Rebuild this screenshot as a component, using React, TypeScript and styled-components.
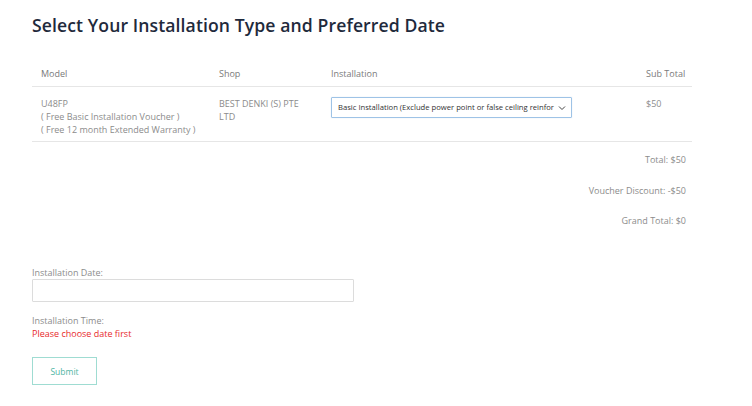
import React from "react";
import styled, { createGlobalStyle } from "styled-components";

const Global = createGlobalStyle`
  html, body { margin: 0; padding: 0; background: #fff; }
  body { font-family: "Open Sans", "Noto Sans", sans-serif; }
  * { box-sizing: border-box; }
`;

const Page = styled.div`
  width: 752px;
  height: 406px;
  padding: 11px 60px 0 32px;
  overflow: hidden;
`;

const Title = styled.h1`
  margin: 0 0 23px;
  font-size: 17.6px;
  line-height: 28px;
  font-weight: 600;
  color: #1f2a3c;
  letter-spacing: 0.1px;
`;

const Table = styled.div`
  width: 660px;
`;

const Row = styled.div<{ $head?: boolean }>`
  display: grid;
  grid-template-columns: 178px 112px 1fr 38px;
  padding: ${(p) => (p.$head ? "5px 8px 0 9px" : "10px 8px 0 9px")};
  height: ${(p) => (p.$head ? "25px" : "55px")};
  border-bottom: 1px solid #e6e6e6;
  font-size: 9px;
  line-height: 13px;
  color: ${(p) => (p.$head ? "#7a7a7a" : "#8c8c8c")};
`;

const Cell = styled.div<{ $right?: boolean }>`
  text-align: ${(p) => (p.$right ? "right" : "left")};
  white-space: nowrap;
`;

const SelectBox = styled.div`
  margin-top: 0;
  width: 241px;
  height: 21px;
  border: 1px solid #9ec3e6;
  border-radius: 1px;
  display: flex;
  align-items: center;
  justify-content: space-between;
  padding: 0 5px 0 6px;
  font-size: 7.65px;
  color: #333;
  white-space: nowrap;
  overflow: hidden;
  box-shadow: 0 0 1px rgba(120, 160, 210, 0.4);
`;

const Totals = styled.div`
  width: 654px;
  display: flex;
  flex-direction: column;
  align-items: flex-end;
  gap: 17.5px;
  padding-top: 11px;
  font-size: 9px;
  line-height: 13px;
  color: #8c8c8c;
`;

const Form = styled.div`
  margin-top: 39px;
  display: flex;
  flex-direction: column;
`;

const Label = styled.div`
  font-size: 9px;
  line-height: 13px;
  color: #8c8c8c;
`;

const Input = styled.div`
  width: 322px;
  height: 23px;
  border: 1px solid #dcdcdc;
  border-radius: 1px;
`;

const TimeBlock = styled.div`
  margin-top: 12px;
`;

const Error = styled.div`
  font-size: 9px;
  line-height: 13px;
  color: #e8292b;
`;

const Button = styled.button`
  margin-top: 17px;
  width: 65px;
  height: 28px;
  background: #fff;
  border: 1px solid #9fdcd2;
  font-family: "Open Sans", sans-serif;
  font-size: 8.5px;
  color: #4fb5a3;
  padding: 0;
`;

export default function App() {
  return (
    <Page>
      <Global />
      <Title>Select Your Installation Type and Preferred Date</Title>
      <Table>
        <Row $head>
          <Cell>Model</Cell>
          <Cell>Shop</Cell>
          <Cell>Installation</Cell>
          <Cell $right>Sub Total</Cell>
        </Row>
        <Row>
          <Cell>
            U48FP
            <br />( Free Basic Installation Voucher )
            <br />( Free 12 month Extended Warranty )
          </Cell>
          <Cell>
            BEST DENKI (S) PTE
            <br />
            LTD
          </Cell>
          <Cell>
            <SelectBox>
              <span>Basic Installation (Exclude power point or false ceiling reinfor</span>
              <svg width="8" height="6" viewBox="0 0 8 6">
                <path d="M1 1.5 L4 4.5 L7 1.5" fill="none" stroke="#444" strokeWidth="1" />
              </svg>
            </SelectBox>
          </Cell>
          <Cell>$50</Cell>
        </Row>
      </Table>
      <Totals>
        <div>Total: $50</div>
        <div>Voucher Discount: -$50</div>
        <div>Grand Total: $0</div>
      </Totals>
      <Form>
        <Label>Installation Date:</Label>
        <Input />
        <TimeBlock>
          <Label>Installation Time:</Label>
          <Error>Please choose date first</Error>
        </TimeBlock>
        <div>
          <Button>Submit</Button>
        </div>
      </Form>
    </Page>
  );
}
